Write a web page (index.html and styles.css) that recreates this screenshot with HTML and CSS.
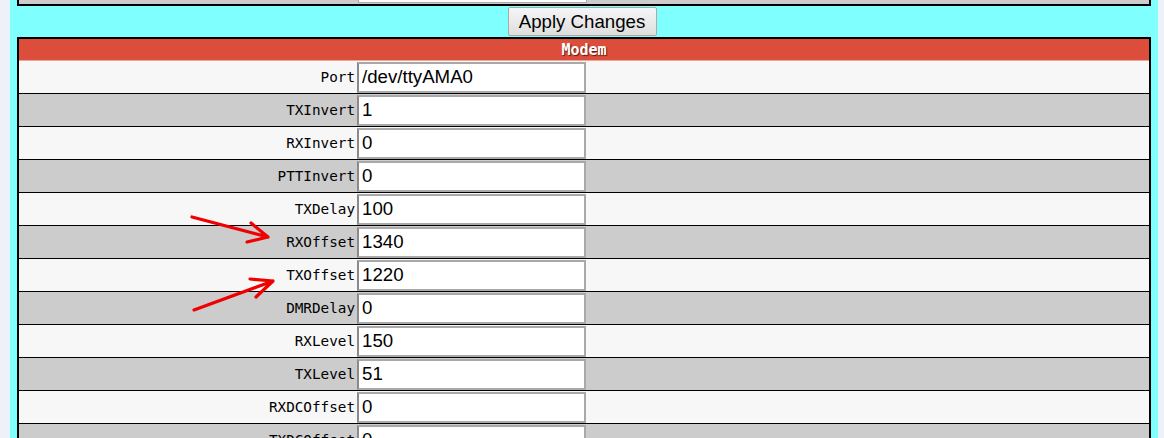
FILE: index.html
```html
<!DOCTYPE html>
<html>
<head>
<meta charset="utf-8">
<link rel="stylesheet" href="styles.css">
</head>
<body>
<div class="page">
  <div class="prev">
    <div class="prev-label"></div>
    <div class="prev-input"></div>
  </div>
  <div class="actions">
    <button class="apply" type="button">Apply Changes</button>
  </div>
  <table class="settings">
    <colgroup>
      <col class="col-lbl">
      <col class="col-val">
      <col class="col-rest">
    </colgroup>
    <thead>
      <tr><th colspan="3" class="head">Modem</th></tr>
    </thead>
    <tbody>
      <tr><td class="lbl">Port</td><td class="val"><input class="field" value="/dev/ttyAMA0"></td><td class="rest"></td></tr>
      <tr><td class="lbl">TXInvert</td><td class="val"><input class="field" value="1"></td><td class="rest"></td></tr>
      <tr><td class="lbl">RXInvert</td><td class="val"><input class="field" value="0"></td><td class="rest"></td></tr>
      <tr><td class="lbl">PTTInvert</td><td class="val"><input class="field" value="0"></td><td class="rest"></td></tr>
      <tr><td class="lbl">TXDelay</td><td class="val"><input class="field" value="100"></td><td class="rest"></td></tr>
      <tr><td class="lbl">RXOffset</td><td class="val"><input class="field" value="1340"></td><td class="rest"></td></tr>
      <tr><td class="lbl">TXOffset</td><td class="val"><input class="field" value="1220"></td><td class="rest"></td></tr>
      <tr><td class="lbl">DMRDelay</td><td class="val"><input class="field" value="0"></td><td class="rest"></td></tr>
      <tr><td class="lbl">RXLevel</td><td class="val"><input class="field" value="150"></td><td class="rest"></td></tr>
      <tr><td class="lbl">TXLevel</td><td class="val"><input class="field" value="51"></td><td class="rest"></td></tr>
      <tr><td class="lbl">RXDCOffset</td><td class="val"><input class="field" value="0"></td><td class="rest"></td></tr>
      <tr><td class="lbl">TXDCOffset</td><td class="val"><input class="field" value="0"></td><td class="rest"></td></tr>
    </tbody>
  </table>
</div>
<svg class="arrows" width="1164" height="438" viewBox="0 0 1164 438">
  <g fill="none" stroke="#f00000" stroke-width="3.2" stroke-linecap="round" stroke-linejoin="round">
    <path d="M192 217 L268 237 M251 223 L268 237 L247 242"/>
    <path d="M194 310 L273 281 M250 279 L273 281 L256 297"/>
  </g>
</svg>
</body>
</html>
```

FILE: styles.css
```css
html, body {
  margin: 0;
  padding: 0;
  height: 438px;
  overflow: hidden;
}
body {
  background: #eef2f8;
  position: relative;
}
.page {
  margin-left: 10px;
  width: 1134px;
  padding: 0 7px;
  background: #80ffff;
  height: 438px;
}
.prev {
  display: flex;
  height: 4px;
  border: 2px solid #000;
  border-top: none;
  background: #cccccc;
}
.prev-label {
  width: 339px;
}
.prev-input {
  width: 227px;
  height: 2px;
  background: #fff;
  border: 1px solid #a9a9a9;
  border-top: none;
}
.actions {
  height: 31px;
  display: flex;
  justify-content: center;
  align-items: flex-start;
}
.apply {
  margin-top: 1px;
  margin-right: 4px;
  width: 149px;
  height: 29px;
  padding: 0;
  font-family: "Liberation Sans", Arial, sans-serif;
  font-size: 18.67px;
  color: #000;
  border: 1px solid #a9a9a9;
  border-radius: 2px;
  background: linear-gradient(#f6f6f6, #dedede);
}
.settings {
  width: 1134px;
  border-collapse: collapse;
  border: 2px solid #000;
  table-layout: fixed;
}
.col-lbl {
  width: 339px;
}
.col-val {
  width: 230px;
}
.head {
  height: 21px;
  padding: 0;
  background: #dc4e3b;
  border-bottom: 1px solid #eaa79c;
  color: #fff;
  font-family: "DejaVu Sans Mono", monospace;
  font-weight: bold;
  font-size: 15px;
  text-shadow: 1px 1px 1px #5a1a10;
  text-align: center;
}
.settings td {
  height: 32px;
  padding: 0;
  border-bottom: 1px solid #000;
}
.settings tbody tr:nth-child(odd) td {
  background: #f7f7f7;
}
.settings tbody tr:nth-child(even) td {
  background: #cccccc;
}
.lbl {
  padding-right: 2px !important;
  text-align: right;
  font-family: "DejaVu Sans Mono", monospace;
  font-size: 14.3px;
  color: #000;
}
.field {
  display: block;
  box-sizing: border-box;
  width: 229px;
  height: 31px;
  margin: 0;
  padding: 0 3px;
  border: 2px solid #a9a9a9;
  border-left-color: #8a8a8a;
  background: #fff;
  font-family: "Liberation Sans", Arial, sans-serif;
  font-size: 18.67px;
  color: #000;
}
.arrows {
  position: absolute;
  left: 0;
  top: 0;
  pointer-events: none;
}
```
